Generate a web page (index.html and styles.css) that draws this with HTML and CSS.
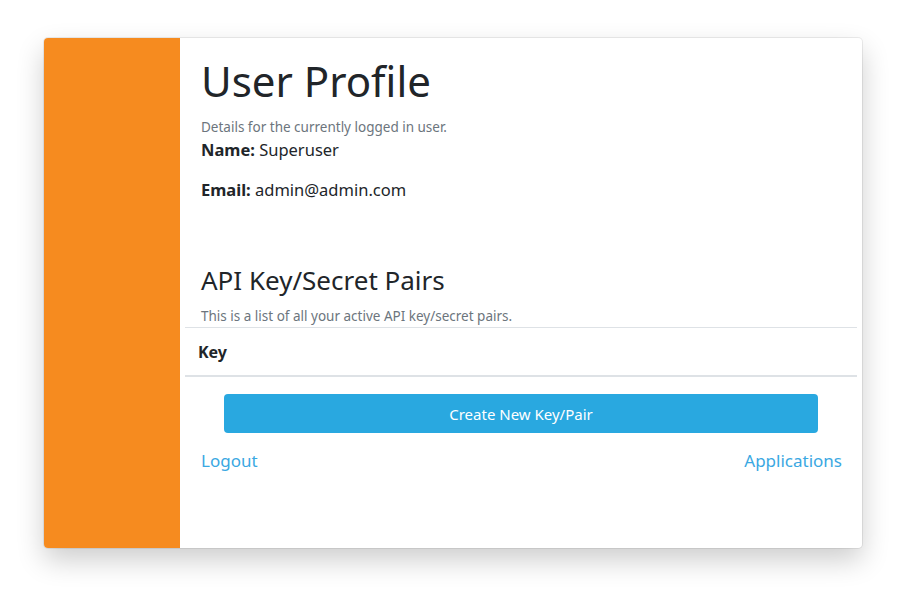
FILE: index.html
```html
<!DOCTYPE html>
<html>
<head>
<meta charset="utf-8">
<link rel="stylesheet" href="styles.css">
</head>
<body>
<div class="card">
  <aside class="side"></aside>
  <main class="content">
    <h1 class="title">User Profile</h1>
    <p class="muted">Details for the currently logged in user.</p>
    <p class="field"><strong>Name:</strong> Superuser</p>
    <p class="field"><strong>Email:</strong> admin@admin.com</p>
    <h2 class="subtitle">API Key/Secret Pairs</h2>
    <p class="muted">This is a list of all your active API key/secret pairs.</p>
    <table class="keys">
      <thead><tr><th>Key</th></tr></thead>
    </table>
    <div class="actions">
      <button class="btn">Create New Key/Pair</button>
    </div>
    <div class="links">
      <a href="#" class="link">Logout</a>
      <a href="#" class="link">Applications</a>
    </div>
  </main>
</div>
</body>
</html>
```
FILE: styles.css
```css
html, body {
  margin: 0;
  padding: 0;
  background: #fff;
}
body {
  font-family: "Noto Sans", "Open Sans", sans-serif;
  color: #212529;
  padding: 38px 61px 0 44px;
  min-height: 100vh;
  box-sizing: border-box;
}
.card {
  display: flex;
  height: 510px;
  border-radius: 4px;
  overflow: hidden;
  box-shadow: 0 0 0 1px rgba(0,0,0,0.07), 0 12px 28px rgba(0,0,0,0.2);
  background: #fff;
}
.side {
  width: 136px;
  flex: none;
  background: #f68b1f;
}
.content {
  flex: 1;
  padding: 19px 0 0 0;
}
.title {
  margin: 0 20px 0 21px;
  font-size: 42px;
  font-weight: 400;
  line-height: 48px;
}
.muted {
  margin: 14px 21px 0;
  font-size: 13.5px;
  line-height: 16px;
  color: #6c757d;
}
.field {
  margin: 3px 21px 16px;
  font-size: 16.5px;
  line-height: 24px;
}
.field + .field { margin-top: 0; }
.field strong { font-weight: 700; }
.subtitle {
  margin: 62px 21px 0;
  font-size: 26px;
  font-weight: 400;
  line-height: 32px;
}
.subtitle + .muted { margin-top: 12px; }
.keys {
  width: calc(100% - 10px);
  margin: 3px 5px 0;
  border-collapse: collapse;
}
.keys th {
  text-align: left;
  font-size: 16px;
  font-weight: 700;
  padding: 14px 13px 13px;
  line-height: 20px;
  border-top: 1px solid #dee2e6;
  border-bottom: 2px solid #dee2e6;
}
.actions {
  padding: 17px 44px 0;
}
.btn {
  display: block;
  width: 100%;
  height: 39px;
  border: none;
  border-radius: 4px;
  background: #29a8e0;
  color: #fff;
  font-family: "Noto Sans", sans-serif;
  font-size: 15px;
}
.links {
  display: flex;
  justify-content: space-between;
  padding: 16px 20px 0 21px;
}
.link {
  color: #3aa8e2;
  text-decoration: none;
  font-size: 17px;
  line-height: 24px;
}
```
